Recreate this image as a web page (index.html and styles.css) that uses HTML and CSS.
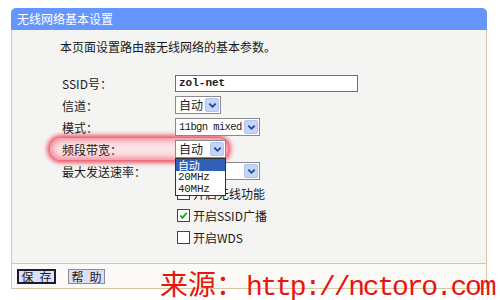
FILE: index.html
```html
<!DOCTYPE html>
<html lang="zh">
<head>
<meta charset="utf-8">
<link rel="stylesheet" href="styles.css">
</head>
<body>
<div class="panel">
  <div class="title">无线网络基本设置</div>
  <div class="content">
    <p class="desc">本页面设置路由器无线网络的基本参数。</p>
    <div class="form">
      <div class="row">
        <span class="label">SSID号：</span>
        <span class="input">zol-net</span>
      </div>
      <div class="row">
        <span class="label">信道：</span>
        <span class="select sel-channel"><span class="val">自动</span><span class="arrow"><svg viewBox="0 0 10 10" width="9" height="9"><path d="M1.5 3 L5 6.5 L8.5 3" fill="none" stroke="#27418f" stroke-width="2"/></svg></span></span>
      </div>
      <div class="row">
        <span class="label">模式：</span>
        <span class="select sel-mode"><span class="val mono">11bgn mixed</span><span class="arrow"><svg viewBox="0 0 10 10" width="9" height="9"><path d="M1.5 3 L5 6.5 L8.5 3" fill="none" stroke="#27418f" stroke-width="2"/></svg></span></span>
      </div>
      <div class="row row-glow">
        <span class="glow"></span>
        <span class="label">频段带宽：</span>
        <span class="select sel-band"><span class="val">自动</span><span class="arrow"><svg viewBox="0 0 10 10" width="9" height="9"><path d="M1.5 3 L5 6.5 L8.5 3" fill="none" stroke="#27418f" stroke-width="2"/></svg></span>
          <ul class="dropdown">
            <li class="active">自动</li>
            <li>20MHz</li>
            <li>40MHz</li>
          </ul>
        </span>
      </div>
      <div class="row">
        <span class="label">最大发送速率：</span>
        <span class="select sel-mode"><span class="val"></span><span class="arrow"><svg viewBox="0 0 10 10" width="9" height="9"><path d="M1.5 3 L5 6.5 L8.5 3" fill="none" stroke="#27418f" stroke-width="2"/></svg></span></span>
      </div>
      <div class="row">
        <span class="label"></span>
        <span class="check"><span class="box"></span>开启无线功能</span>
      </div>
      <div class="row">
        <span class="label"></span>
        <span class="check"><span class="box"><svg viewBox="0 0 12 12" width="11" height="11"><path d="M2.5 6 L5 8.5 L9.5 3" fill="none" stroke="#22a022" stroke-width="2"/></svg></span>开启SSID广播</span>
      </div>
      <div class="row">
        <span class="label"></span>
        <span class="check"><span class="box"></span>开启WDS</span>
      </div>
    </div>
  </div>
  <div class="actions">
    <span class="btn btn-focus"><span>保</span><span>存</span></span>
    <span class="btn"><span>帮</span><span>助</span></span>
  </div>
</div>
<div class="watermark">来源：<span class="url">http://nctoro.com</span></div>
</body>
</html>
```
FILE: styles.css
```css
html, body {
  margin: 0;
  padding: 0;
  background: #ffffff;
  width: 500px;
  height: 300px;
  overflow: hidden;
  position: relative;
  font-family: "Noto Sans CJK SC", "DejaVu Sans", sans-serif;
  font-size: 12px;
  color: #1a1a1a;
}

.panel {
  margin: 8px 0 0 11px;
  width: 476px;
}

.title {
  height: 22px;
  line-height: 22px;
  background: #6596fd;
  color: #ffffff;
  padding-left: 6px;
  border-radius: 5px 5px 0 0;
  font-size: 12px;
}

.content {
  background: #f4f4f2;
  border-left: 1px solid #d8c7a4;
  border-right: 1px solid #d8c7a4;
  border-bottom: 1px solid #d8c7a4;
  padding: 7px 0 15px 48px;
}

.desc {
  margin: 0 0 15px 0;
  height: 20px;
  line-height: 20px;
}

.form {
  display: flex;
  flex-direction: column;
  padding-left: 2px;
}

.row {
  position: relative;
  display: flex;
  align-items: center;
  height: 22px;
}

.label {
  width: 113px;
  flex: none;
  position: relative;
  z-index: 1;
}

.input {
  box-sizing: border-box;
  width: 183px;
  height: 17px;
  border: 1px solid #6f6f6f;
  background: #fff;
  font-family: "Liberation Mono", monospace;
  font-size: 11px;
  font-weight: bold;
  line-height: 15px;
  padding-left: 3px;
}

.select {
  position: relative;
  z-index: 1;
  box-sizing: border-box;
  display: flex;
  align-items: center;
  height: 18px;
  border: 1px solid #8a8a8a;
  background: #fff;
  padding: 0 1px 0 3px;
  justify-content: space-between;
  white-space: nowrap;
}

.val {
  line-height: 16px;
  white-space: nowrap;
}

.mono {
  font-family: "Liberation Mono", monospace;
  font-size: 10.5px;
  letter-spacing: -0.6px;
}

.arrow {
  flex: none;
  width: 14px;
  height: 14px;
  background: #c4d4fa;
  border: 1px solid #b0c4f0;
  box-sizing: border-box;
  display: flex;
  align-items: center;
  justify-content: center;
  border-radius: 2px;
}

.sel-channel { width: 46px; }
.sel-mode { width: 85px; }
.sel-band { width: 51px; z-index: 4; }

.dropdown {
  position: absolute;
  left: -1px;
  top: 17px;
  width: 51px;
  box-sizing: border-box;
  margin: 0;
  padding: 0;
  list-style: none;
  background: #fff;
  border: 1px solid #333;
  z-index: 5;
}

.dropdown li {
  display: block;
  height: 12px;
  line-height: 12px;
  padding-left: 2px;
  font-size: 11px;
  white-space: nowrap;
  font-family: "Liberation Mono", "Noto Sans CJK SC", monospace;
  letter-spacing: -0.3px;
}

.dropdown li.active {
  background: #3160b8;
  color: #fff;
  font-family: "Noto Sans CJK SC", sans-serif;
}

.glow {
  position: absolute;
  left: -12px;
  top: 0;
  width: 178px;
  height: 22px;
  border-radius: 11px;
  background: rgba(255, 222, 228, 0.75);
  box-shadow: 0 0 4px 3px rgba(235, 50, 75, 0.8), inset 0 0 6px 2px rgba(235, 50, 75, 0.55);
  z-index: 0;
}

.check {
  display: flex;
  align-items: center;
  gap: 3px;
  margin-left: 2px;
}

.box {
  box-sizing: border-box;
  width: 13px;
  height: 13px;
  border: 1px solid #2b4a6a;
  background: #fff;
  display: flex;
  align-items: center;
  justify-content: center;
}

.actions {
  height: 24px;
  background: #fbfaf6;
  border-left: 1px solid #d8c7a4;
  border-right: 1px solid #d8c7a4;
  border-bottom: 1px solid #d8c7a4;
  display: flex;
  align-items: center;
  gap: 12px;
  padding-left: 5px;
}

.btn {
  box-sizing: border-box;
  width: 37px;
  height: 15px;
  line-height: 13px;
  background: #dcdff5;
  border: 1px solid #8a8a9a;
  font-size: 12px;
  white-space: nowrap;
  display: flex;
  justify-content: center;
  align-items: center;
  gap: 6px;
}

.btn-focus {
  border: 2px solid #1b1b33;
  width: 39px;
  line-height: 11px;
}

.watermark {
  position: absolute;
  left: 160px;
  top: 269px;
  color: #e8140f;
  font-family: "Liberation Serif", "Noto Sans CJK SC", serif;
  font-size: 28px;
  line-height: 34px;
  white-space: nowrap;
  z-index: 10;
}

.url {
  font-family: "Liberation Mono", monospace;
  font-size: 28px;
  letter-spacing: -2.2px;
  margin-left: 2px;
}
```
